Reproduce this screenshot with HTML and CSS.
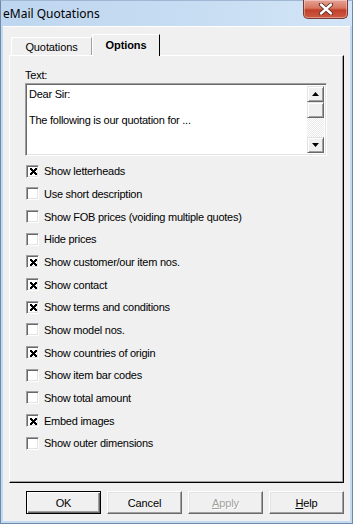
FILE: index.html
```html
<!DOCTYPE html>
<html>
<head>
<meta charset="utf-8">
<link rel="stylesheet" href="styles.css">
</head>
<body>
<div class="window">
  <div class="titlebar">
    <span class="title">eMail Quotations</span>
    <div class="close">
      <svg width="18" height="12" viewBox="0 0 18 12">
        <path d="M4 1.5 L14 10.5 M14 1.5 L4 10.5" stroke="#5a2a22" stroke-width="4.2" stroke-linecap="round"/>
        <path d="M4 1.5 L14 10.5 M14 1.5 L4 10.5" stroke="#ffffff" stroke-width="2.4" stroke-linecap="round"/>
      </svg>
    </div>
  </div>
  <div class="client">
    <div class="tabs">
      <div class="tab">Quotations</div>
      <div class="tab active">Options</div>
    </div>
    <div class="panel">
      <div class="label">Text:</div>
      <div class="textbox">
        <div class="textcontent">
          <div>Dear Sir:</div>
          <div>&nbsp;</div>
          <div>The following is our quotation for ...</div>
        </div>
        <div class="scrollbar">
          <div class="sbtn"><svg width="7" height="4" viewBox="0 0 7 4"><path d="M3.5 0 L7 4 L0 4 Z" fill="#000"/></svg></div>
          <div class="thumb"></div>
          <div class="track"></div>
          <div class="sbtn"><svg width="7" height="4" viewBox="0 0 7 4"><path d="M0 0 L7 0 L3.5 4 Z" fill="#000"/></svg></div>
        </div>
      </div>
      <div class="checks">
        <div class="row"><span class="cb"><svg class="x" viewBox="0 0 9 9" width="9" height="9"><path d="M1 1h2v1h1v1h1v-1h1v-1h2v2h-1v1h-1v1h1v1h1v2h-2v-1h-1v-1h-1v1h-1v1h-2v-2h1v-1h1v-1h-1v-1h-1z" fill="#000"/></svg></span>Show letterheads</div>
        <div class="row"><span class="cb"></span>Use short description</div>
        <div class="row"><span class="cb"></span>Show FOB prices (voiding multiple quotes)</div>
        <div class="row"><span class="cb"></span>Hide prices</div>
        <div class="row"><span class="cb"><svg class="x" viewBox="0 0 9 9" width="9" height="9"><path d="M1 1h2v1h1v1h1v-1h1v-1h2v2h-1v1h-1v1h1v1h1v2h-2v-1h-1v-1h-1v1h-1v1h-2v-2h1v-1h1v-1h-1v-1h-1z" fill="#000"/></svg></span>Show customer/our item nos.</div>
        <div class="row"><span class="cb"><svg class="x" viewBox="0 0 9 9" width="9" height="9"><path d="M1 1h2v1h1v1h1v-1h1v-1h2v2h-1v1h-1v1h1v1h1v2h-2v-1h-1v-1h-1v1h-1v1h-2v-2h1v-1h1v-1h-1v-1h-1z" fill="#000"/></svg></span>Show contact</div>
        <div class="row"><span class="cb"><svg class="x" viewBox="0 0 9 9" width="9" height="9"><path d="M1 1h2v1h1v1h1v-1h1v-1h2v2h-1v1h-1v1h1v1h1v2h-2v-1h-1v-1h-1v1h-1v1h-2v-2h1v-1h1v-1h-1v-1h-1z" fill="#000"/></svg></span>Show terms and conditions</div>
        <div class="row"><span class="cb"></span>Show model nos.</div>
        <div class="row"><span class="cb"><svg class="x" viewBox="0 0 9 9" width="9" height="9"><path d="M1 1h2v1h1v1h1v-1h1v-1h2v2h-1v1h-1v1h1v1h1v2h-2v-1h-1v-1h-1v1h-1v1h-2v-2h1v-1h1v-1h-1v-1h-1z" fill="#000"/></svg></span>Show countries of origin</div>
        <div class="row"><span class="cb"></span>Show item bar codes</div>
        <div class="row"><span class="cb"></span>Show total amount</div>
        <div class="row"><span class="cb"><svg class="x" viewBox="0 0 9 9" width="9" height="9"><path d="M1 1h2v1h1v1h1v-1h1v-1h2v2h-1v1h-1v1h1v1h1v2h-2v-1h-1v-1h-1v1h-1v1h-2v-2h1v-1h1v-1h-1v-1h-1z" fill="#000"/></svg></span>Embed images</div>
        <div class="row"><span class="cb"></span>Show outer dimensions</div>
      </div>
    </div>
    <div class="buttons">
      <div class="btn default">OK</div>
      <div class="btn">Cancel</div>
      <div class="btn disabled"><span class="u">A</span>pply</div>
      <div class="btn"><span class="u">H</span>elp</div>
    </div>
  </div>
</div>
</body>
</html>
```

FILE: styles.css
```css
* { box-sizing: border-box; }
html, body { margin: 0; padding: 0; }
body {
  width: 353px;
  height: 524px;
  overflow: hidden;
  font-family: "Liberation Sans", Arial, sans-serif;
  font-size: 11px;
  color: #000;
}
.window {
  width: 353px;
  height: 524px;
  background: #c4daf1;
  border: 1px solid #6f8aa8;
  border-top-color: #9fb7d2;
  display: flex;
  flex-direction: column;
}
.titlebar {
  height: 25px;
  display: flex;
  align-items: flex-start;
  justify-content: space-between;
  background: linear-gradient(to right, #bed6ef 0%, #c6dcf2 50%, #d3e5f7 100%);
}
.title {
  font-family: "Noto Sans", "Open Sans", sans-serif;
  font-size: 12px;
  padding: 5px 0 0 2px;
  line-height: 16px;
}
.close {
  width: 45px;
  height: 19px;
  margin-right: 4px;
  margin-top: -1px;
  border: 1px solid #7a3a33;
  border-top: none;
  border-radius: 0 0 5px 5px;
  background: linear-gradient(to bottom, #e6a295 0%, #d7765f 45%, #c2402a 55%, #cd5a43 100%);
  box-shadow: inset 0 0 0 1px rgba(255,255,255,0.35);
  display: flex;
  align-items: center;
  justify-content: center;
}
.client {
  flex: 1;
  margin: 0 2px 2px 2px;
  background: #f0f0f0;
  border-top: 1px solid #ffffff;
  padding: 6px 6px 0 6px;
  display: flex;
  flex-direction: column;
}
.tabs {
  display: flex;
  align-items: flex-end;
  padding-left: 2px;
  height: 22px;
  position: relative;
  z-index: 1;
}
.tab {
  height: 18px;
  padding: 0 12px;
  display: flex;
  align-items: center;
  justify-content: center;
  border-left: 1px solid #ffffff;
  border-top: 1px solid #ffffff;
  border-right: 1px solid #a0a0a0;
  width: 81px;
  font-size: 11px;
  letter-spacing: -0.1px;
}
.tab.active {
  height: 22px;
  width: 68px;
  font-weight: bold;
  border-right: 1px solid #000;
  margin-bottom: -1px;
  background: #f0f0f0;
  padding-bottom: 2px;
}
.panel {
  width: 335px;
  height: 428px;
  border-left: 1px solid #ffffff;
  border-top: 1px solid #ffffff;
  border-right: 1px solid #000000;
  border-bottom: 1px solid #000000;
  box-shadow: inset -1px -1px 0 #a0a0a0;
  padding: 12px 0 0 15px;
}
.label {
  font-size: 11px;
  letter-spacing: -0.2px;
  line-height: 14px;
  height: 15px;
}
.textbox {
  width: 302px;
  height: 73px;
  border-top: 1px solid #a0a0a0;
  border-left: 1px solid #a0a0a0;
  border-right: 1px solid #ffffff;
  border-bottom: 1px solid #ffffff;
  box-shadow: inset 1px 1px 0 #696969, inset -1px -1px 0 #e3e3e3;
  background: #fff;
  display: flex;
  padding: 2px;
}
.textcontent {
  flex: 1;
  font-size: 11px;
  letter-spacing: -0.25px;
  line-height: 13px;
  padding: 2px 0 0 1px;
}
.scrollbar {
  width: 17px;
  display: flex;
  flex-direction: column;
}
.sbtn, .thumb {
  height: 16px;
  background: #f0f0f0;
  border-top: 1px solid #e3e3e3;
  border-left: 1px solid #e3e3e3;
  border-right: 1px solid #696969;
  border-bottom: 1px solid #696969;
  box-shadow: inset 1px 1px 0 #ffffff, inset -1px -1px 0 #a0a0a0;
  display: flex;
  align-items: center;
  justify-content: center;
}
.track {
  flex: 1;
  background-color: #f4f4f4;
  background-image: repeating-conic-gradient(#ffffff 0 25%, #e8e8e8 0 50%);
  background-size: 2px 2px;
}
.checks {
  margin-top: 4px;
  display: grid;
  grid-auto-rows: 22.67px;
  padding-left: 1px;
}
.row {
  display: flex;
  align-items: center;
  font-size: 11px;
  letter-spacing: -0.25px;
  gap: 5px;
}
.cb {
  width: 13px;
  height: 13px;
  background: #fff;
  border-top: 1px solid #a0a0a0;
  border-left: 1px solid #a0a0a0;
  border-right: 1px solid #ffffff;
  border-bottom: 1px solid #ffffff;
  box-shadow: inset 1px 1px 0 #696969, inset -1px -1px 0 #e3e3e3;
  flex: none;
  display: flex;
  align-items: center;
  justify-content: center;
  padding: 1px 0 0 1px;
}
.x {
  display: block;
  shape-rendering: crispEdges;
}
.buttons {
  display: flex;
  gap: 6px;
  padding: 8px 0 0 17px;
}
.btn {
  width: 75px;
  height: 23px;
  border-top: 1px solid #ffffff;
  border-left: 1px solid #ffffff;
  border-right: 1px solid #696969;
  border-bottom: 1px solid #696969;
  box-shadow: inset -1px -1px 0 #a0a0a0, inset 1px 1px 0 #e3e3e3;
  display: flex;
  align-items: center;
  justify-content: center;
  font-size: 11px;
  letter-spacing: -0.1px;
}
.btn.default {
  border: 1px solid #000;
  box-shadow: inset 1px 1px 0 #ffffff, inset -1px -1px 0 #696969, inset -2px -2px 0 #a0a0a0;
}
.btn.disabled {
  color: #a0a0a0;
  text-shadow: 1px 1px 0 #ffffff;
}
.u { text-decoration: underline; }
```
